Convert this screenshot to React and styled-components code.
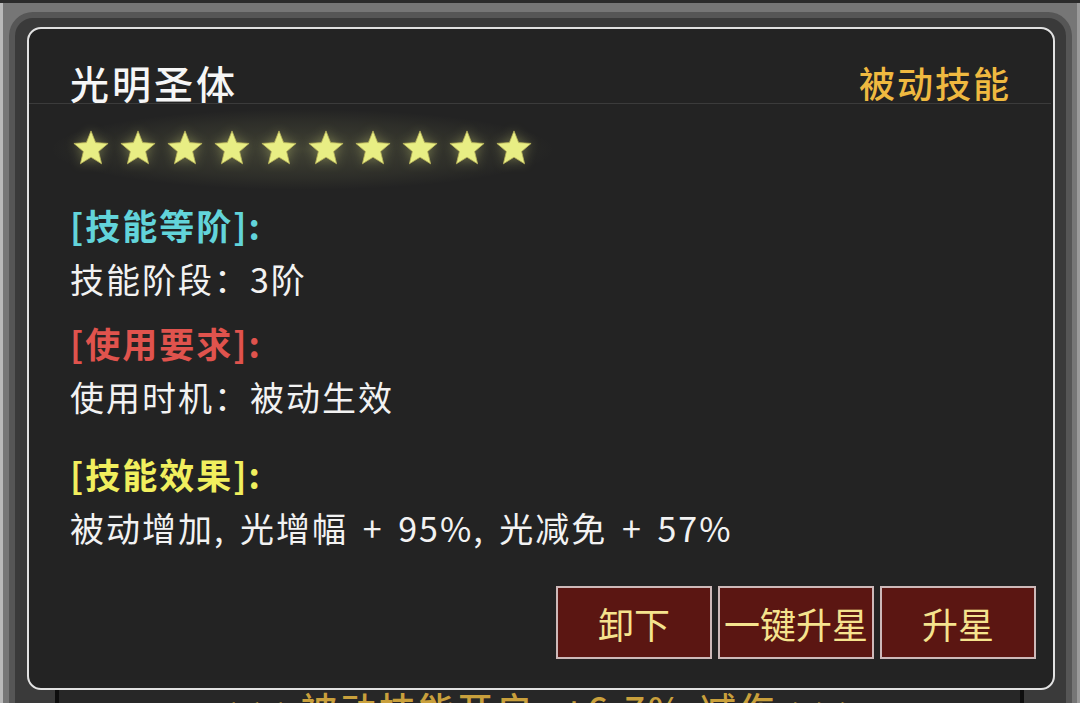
import styled, { createGlobalStyle } from 'styled-components';

const GlobalStyle = createGlobalStyle`
    * { box-sizing: border-box; }
    html, body {
        margin: 0;
        padding: 0;
        background: #2a2a2a;
    }
    body {
        font-family: "Noto Sans CJK SC", "Noto Sans", sans-serif;
    }
`;

const sections = [
    { title: '[技能等阶]:', color: '#62d4da', text: '技能阶段：3阶', gap: 0 },
    { title: '[使用要求]:', color: '#e0534d', text: '使用时机：被动生效', gap: 10 },
    { title: '[技能效果]:', color: '#f1ef5e', text: '被动增加, 光增幅 + 95%, 光减免 + 57%', gap: 23 },
];

const buttons = ['卸下', '一键升星', '升星'];

function Star() {
    return (
        <StarIcon viewBox="0 0 24 24">
            <polygon
                points="12,1.2 14.9,8.6 22.8,9.1 16.8,14.2 18.7,22 12,17.8 5.3,22 7.2,14.2 1.2,9.1 9.1,8.6"
                fill="#e8ee84"
                stroke="#b9b45a"
                strokeWidth="0.5"
                strokeLinejoin="round"
            />
        </StarIcon>
    );
}

function App() {
    return (
        <Page>
            <GlobalStyle />
            <Frame>
                <InnerPanel>
                    <ListBox>
                        <ListLine>{'<<< 被动技能开启: +6.7% 减伤 >>>'}</ListLine>
                    </ListBox>
                </InnerPanel>
            </Frame>

            <Dialog>
                <Header>
                    <Title>光明圣体</Title>
                    <Kind>被动技能</Kind>
                </Header>

                <StarRow>
                    {Array.from({ length: 10 }).map((_, i) => <Star key={i} />)}
                </StarRow>

                <Body>
                    {sections.map((s) => (
                        <Section key={s.title} $gap={s.gap}>
                            <SectionTitle $color={s.color}>{s.title}</SectionTitle>
                            <SectionText>{s.text}</SectionText>
                        </Section>
                    ))}
                </Body>

                <Actions>
                    {buttons.map((b) => <ActionButton key={b}>{b}</ActionButton>)}
                </Actions>
            </Dialog>
        </Page>
    );
}

const Page = styled.div`
    position: relative;
    width: 1080px;
    height: 703px;
    overflow: hidden;
    padding-top: 3px;
    background: #2b2b2b;
`;
const Frame = styled.div`
    display: flex;
    height: 700px;
    padding: 9px 5px 0 6px;
    background: #767676;
    border-left: 3px solid #b9b9b9;
    border-right: 3px solid #9a9a9a;
`;
const InnerPanel = styled.div`
    display: flex;
    flex-direction: column;
    flex: 1;
    border: 6px solid #565656;
    border-bottom: 0;
    border-radius: 24px 24px 0 0;
    background: #3a3a3a;
    overflow: hidden;
`;
const ListBox = styled.div`
    display: flex;
    justify-content: center;
    margin: 540px 42px 0 40px;
    height: 240px;
    padding-top: 130px;
    background: #272727;
    border-left: 4px solid #0e0e0e;
    border-right: 4px solid #0e0e0e;
`;
const ListLine = styled.div`
    height: 40px;
    line-height: 40px;
    font-size: 36px;
    font-weight: 500;
    color: #c9a03c;
    letter-spacing: 3px;
    word-spacing: 4px;
`;
const Dialog = styled.div`
    position: absolute;
    top: 27px;
    left: 27px;
    width: 1028px;
    height: 663px;
    display: flex;
    flex-direction: column;
    background: #232323;
    border: 2px solid #e2e2e2;
    border-radius: 14px;
    padding: 0 17px 29px 41px;
`;
const Header = styled.div`
    display: flex;
    align-items: center;
    justify-content: space-between;
    height: 75px;
    padding: 32px 40px 0 41px;
    margin: 0 -15px 0 -41px;
    border-bottom: 1px solid #3b3b3b;
`;
const Title = styled.div`
    font-size: 39px;
    font-weight: 500;
    letter-spacing: 3px;
    color: #f6f6f6;
`;
const Kind = styled.div`
    font-size: 36px;
    font-weight: 500;
    letter-spacing: 2px;
    color: #efb940;
`;
const StarRow = styled.div`
    display: flex;
    gap: 9px;
    align-self: flex-start;
    margin: 5px 0 0 -20px;
    padding: 20px 22px 23px;
    background: radial-gradient(ellipse closest-side, rgba(215, 222, 140, 0.16), rgba(215, 222, 140, 0.06) 70%, rgba(0, 0, 0, 0));
`;
const StarIcon = styled.svg`
    width: 38px;
    height: 38px;
    display: block;
    filter: drop-shadow(0 0 6px rgba(232, 238, 132, 0.35));
`;
const Body = styled.div`
    display: flex;
    flex-direction: column;
    margin-top: 8px;
`;
const Section = styled.div`
    display: flex;
    flex-direction: column;
    margin-top: ${props => props.$gap}px;
`;
const SectionTitle = styled.div`
    height: 54px;
    line-height: 54px;
    font-size: 35px;
    font-weight: 700;
    letter-spacing: 2px;
    color: ${props => props.$color};
`;
const SectionText = styled.div`
    height: 54px;
    line-height: 54px;
    font-size: 34px;
    letter-spacing: 2px;
    word-spacing: 5px;
    color: #f2f2f2;
`;
const Actions = styled.div`
    display: flex;
    justify-content: flex-end;
    gap: 6px;
    margin-top: auto;
`;
const ActionButton = styled.button`
    width: 156px;
    height: 73px;
    padding: 0;
    display: flex;
    align-items: center;
    justify-content: center;
    background: #5b1612;
    border: 2px solid #cdb9b9;
    font-family: "Noto Sans CJK SC", sans-serif;
    font-size: 36px;
    color: #f5e38e;
    white-space: nowrap;
    cursor: pointer;
`;

export default App;
